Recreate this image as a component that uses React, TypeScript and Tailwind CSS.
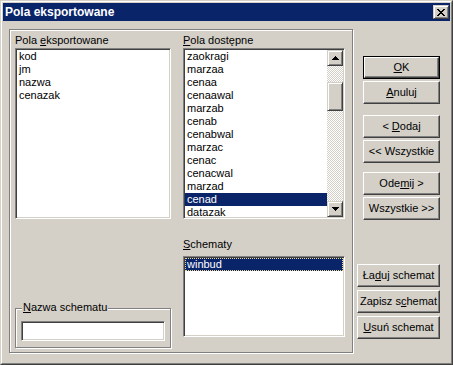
import React from 'react';

const raised =
  'border border-t-white border-l-white border-r-[#404040] border-b-[#404040] shadow-[inset_-1px_-1px_0_#808080]';
const sbRaised =
  'border border-t-[#d4d0c8] border-l-[#d4d0c8] border-r-[#404040] border-b-[#404040] shadow-[inset_1px_1px_0_#fff,inset_-1px_-1px_0_#808080]';
const sunken =
  'border border-t-[#808080] border-l-[#808080] border-r-white border-b-white shadow-[inset_1px_1px_0_#404040,inset_-1px_-1px_0_#d4d0c8]';
const etched = 'border border-[#808080] shadow-[inset_1px_1px_0_#fff,1px_1px_0_#fff]';

const available = [
  'zaokragi',
  'marzaa',
  'cenaa',
  'cenaawal',
  'marzab',
  'cenab',
  'cenabwal',
  'marzac',
  'cenac',
  'cenacwal',
  'marzad',
  'cenad',
  'datazak',
];

const exported = ['kod', 'jm', 'nazwa', 'cenazak'];

const Btn: React.FC<{ children: React.ReactNode; className?: string; def?: boolean }> = ({
  children,
  className = '',
  def,
}) =>
  def ? (
    <div className={`border border-black ${className}`}>
      <div className={`${raised} h-full flex items-center justify-center`}>
        <span className="whitespace-pre">{children}</span>
      </div>
    </div>
  ) : (
    <div className={`${raised} flex items-center justify-center ${className}`}>
      <span className="whitespace-pre">{children}</span>
    </div>
  );

const Arrow: React.FC<{ down?: boolean }> = ({ down }) => (
  <svg width="7" height="4" viewBox="0 0 7 4" shapeRendering="crispEdges">
    {down ? (
      <>
        <rect x="0" y="0" width="7" height="1" />
        <rect x="1" y="1" width="5" height="1" />
        <rect x="2" y="2" width="3" height="1" />
        <rect x="3" y="3" width="1" height="1" />
      </>
    ) : (
      <>
        <rect x="3" y="0" width="1" height="1" />
        <rect x="2" y="1" width="3" height="1" />
        <rect x="1" y="2" width="5" height="1" />
        <rect x="0" y="3" width="7" height="1" />
      </>
    )}
  </svg>
);

const Row: React.FC<{ text: string; selected?: boolean; focus?: boolean }> = ({ text, selected, focus }) => (
  <div
    className={`h-[13px] leading-[13px] px-[2px] whitespace-nowrap ${
      selected ? 'bg-[#0a246a] text-white' : ''
    } ${focus ? 'outline outline-1 outline-dotted outline-[#f0d890] -outline-offset-1' : ''}`}
  >
    {text}
  </div>
);

export default function App() {
  return (
    <div
      className="w-[453px] h-[365px] bg-[#d4d0c8] text-black text-[11px] border border-t-[#d4d0c8] border-l-[#d4d0c8] border-r-[#404040] border-b-[#404040]"
      style={{ fontFamily: '"Liberation Sans", Arial, sans-serif' }}
    >
      <div className="h-full border border-t-white border-l-white border-r-[#808080] border-b-[#808080] p-[1px]">
        {/* title bar */}
        <div className="h-[18px] bg-[#0a246a] flex items-center justify-between pl-[2px] pr-[1px]">
          <span className="text-white font-bold text-[12px] leading-[18px]">Pola eksportowane</span>
          <div className={`${sbRaised} bg-[#d4d0c8] w-[16px] h-[14px] flex items-center justify-center`}>
            <svg width="8" height="7" viewBox="0 0 8 7" shapeRendering="crispEdges">
              <rect x="0" y="0" width="2" height="1" />
              <rect x="6" y="0" width="2" height="1" />
              <rect x="1" y="1" width="2" height="1" />
              <rect x="5" y="1" width="2" height="1" />
              <rect x="2" y="2" width="4" height="1" />
              <rect x="3" y="3" width="2" height="1" />
              <rect x="2" y="4" width="4" height="1" />
              <rect x="1" y="5" width="2" height="1" />
              <rect x="5" y="5" width="2" height="1" />
              <rect x="0" y="6" width="2" height="1" />
              <rect x="6" y="6" width="2" height="1" />
            </svg>
          </div>
        </div>

        <div className="flex pl-[6px] pt-[8px]">
          {/* group */}
          <div className={`${etched} w-[344px] h-[324px] flex pl-[5px] pt-[4px] gap-[12px]`}>
            {/* left column */}
            <div className="w-[156px] flex flex-col">
              <div className="h-[13px] leading-[13px]">
                Pola <span className="underline">e</span>ksportowane
              </div>
              <div className={`${sunken} bg-white mt-[1px] h-[171px] p-[1px]`}>
                {exported.map((t) => (
                  <Row key={t} text={t} />
                ))}
              </div>
              <div className={`${etched} relative mt-[89px] h-[40px] pl-[5px] pt-[12px]`}>
                <span className="absolute left-[6px] top-[-8px] px-[1px] bg-[#d4d0c8] leading-[13px]">
                  <span className="underline">N</span>azwa schematu
                </span>
                <div className={`${sunken} bg-white w-[144px] h-[20px]`} />
              </div>
            </div>

            {/* right column */}
            <div className="w-[162px] flex flex-col">
              <div className="h-[13px] leading-[13px]">
                <span className="underline">P</span>ola dostępne
              </div>
              <div className={`${sunken} bg-white mt-[1px] h-[171px] p-[1px] flex`}>
                <div className="flex-1">
                  {available.map((t) => (
                    <Row key={t} text={t} selected={t === 'cenad'} />
                  ))}
                </div>
                <div className="w-[16px] flex flex-col">
                  <div className={`${sbRaised} bg-[#d4d0c8] h-[16px] flex items-center justify-center`}>
                    <Arrow />
                  </div>
                  <div className="h-[16px] bg-[repeating-conic-gradient(#fff_0_25%,#d4d0c8_0_50%)] bg-[length:2px_2px]" />
                  <div className={`${sbRaised} bg-[#d4d0c8] h-[29px]`} />
                  <div className="flex-1 bg-[repeating-conic-gradient(#fff_0_25%,#d4d0c8_0_50%)] bg-[length:2px_2px]" />
                  <div className={`${sbRaised} bg-[#d4d0c8] h-[16px] flex items-center justify-center`}>
                    <Arrow down />
                  </div>
                </div>
              </div>
              <div className="h-[13px] leading-[13px] mt-[19px]">
                <span className="underline">S</span>chematy
              </div>
              <div className={`${sunken} bg-white mt-[5px] h-[81px] p-[1px]`}>
                <Row text="winbud" selected focus />
              </div>
            </div>
          </div>

          {/* buttons */}
          <div className="ml-[4px] w-[83px] flex flex-col items-end">
            <Btn def className="mt-[27px] w-[77px] h-[23px]">
              <span className="underline">O</span>K
            </Btn>
            <Btn className="mt-[2px] w-[77px] h-[23px]">
              <span className="underline">A</span>nuluj
            </Btn>
            <Btn className="mt-[11px] w-[77px] h-[23px]">
              {'< '}
              <span className="underline">D</span>odaj
            </Btn>
            <Btn className="mt-[2px] w-[77px] h-[23px]">&lt;&lt; Wszystkie</Btn>
            <Btn className="mt-[9px] w-[77px] h-[23px]">
              Ode<span className="underline">m</span>ij &gt;
            </Btn>
            <Btn className="mt-[2px] w-[77px] h-[23px]">Wszystkie &gt;&gt;</Btn>
            <Btn className="mt-[44px] w-[83px] h-[23px]">
              Ła<span className="underline">d</span>uj schemat
            </Btn>
            <Btn className="mt-[3px] w-[83px] h-[23px]">
              Zapisz s<span className="underline">c</span>hemat
            </Btn>
            <Btn className="mt-[3px] w-[83px] h-[23px]">
              <span className="underline">U</span>suń schemat
            </Btn>
          </div>
        </div>
      </div>
    </div>
  );
}
